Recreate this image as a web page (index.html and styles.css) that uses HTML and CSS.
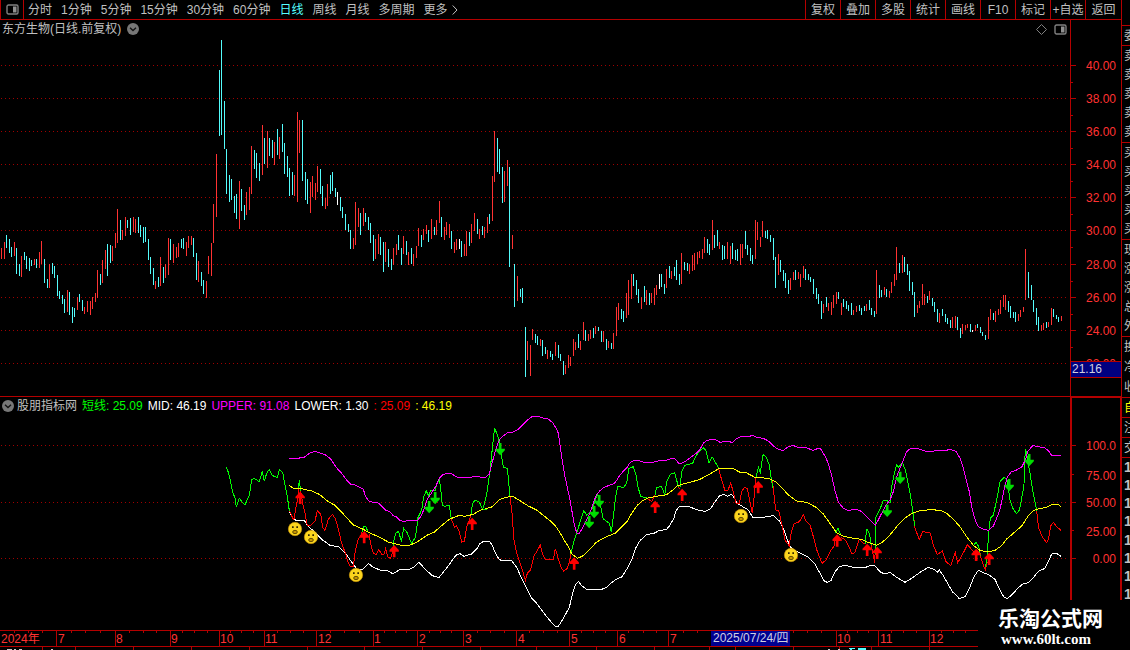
FILE: index.html
```html
<!DOCTYPE html>
<html lang="zh-CN">
<head>
<meta charset="utf-8">
<title>东方生物 日线</title>
<link rel="stylesheet" href="styles.css">
</head>
<body>
<div class="page">
<main class="main">
<nav class="toolbar">
<button class="layout-btn" aria-label="布局"><svg width="13" height="11" viewBox="0 0 13 11"><rect x="1" y="1" width="11" height="9" rx="1.5" fill="none" stroke="#808080" stroke-width="1.4"/><path d="M7 2.5h3.5v6H7z" fill="#909090"/></svg></button>
<div class="periods">
<button>分时</button><button>1分钟</button><button>5分钟</button><button>15分钟</button><button>30分钟</button><button>60分钟</button><button class="active">日线</button><button>周线</button><button>月线</button><button>多周期</button><button class="more">更多<svg width="6" height="10" viewBox="0 0 6 10"><path d="M.7 .5L5 5L.7 9.5" fill="none" stroke="#c0c0c0"/></svg></button>
</div>
<div class="tools">
<button>复权</button><button>叠加</button><button>多股</button><button>统计</button><button>画线</button><button>F10</button><button>标记</button><button>+自选</button><button>返回</button>
</div>
</nav>

<section class="panel price">
<div class="plot">
<header class="plot-head">
<span>东方生物(日线.前复权)</span>
<button class="fold" aria-label="展开"><svg width="12" height="12" viewBox="0 0 12 12"><circle cx="6" cy="6" r="6" fill="#777"/><path d="M3 4.7L6 7.5L9 4.7" fill="none" stroke="#111" stroke-width="1.3"/></svg></button>
<span class="head-icons">
<svg width="11" height="11" viewBox="0 0 11 11"><path d="M5.5 .5l5 5l-5 5l-5-5z" fill="none" stroke="#808080"/></svg>
<svg width="13" height="11" viewBox="0 0 13 11"><rect x="1" y="1" width="11" height="9" rx="1.5" fill="none" stroke="#808080" stroke-width="1.4"/><path d="M7 2.5h3.5v6H7z" fill="#909090"/></svg>
</span>
</header>
<svg class="chart price-chart" viewBox="0 120 3210 1068" preserveAspectRatio="none">
<path class="grid" d="M3 196.500H3198M3 295.500H3198M3 394.500H3198M3 493.500H3198M3 592.500H3198M3 691.500H3198M3 793.500H3198M3 892.500H3198M3 991.500H3198M3 1090.500H3198"/>
<g class="bars" transform="translate(.5 90)">
<path class="up" d="M4 654V687M13 636V687M43 636V678M64 678V741M103 687V705M118 666V714M124 633V702M148 702V774M202 780V846M232 801V840M253 831V852M262 813V846M271 813V855M277 801V837M286 789V816M292 720V804M307 690V759M316 660V717M337 648V693M346 609V654M352 537V639M367 600V630M376 561V618M400 561V606M406 567V609M466 753V777M481 681V768M496 702V744M505 624V735M520 642V699M529 651V684M535 639V681M559 636V678M565 618V654M574 618V645M595 693V756M619 753V804M625 678V732M634 639V738M640 522V639M649 372V561M718 453V597"/>
<path class="down" d="M19 615V654M28 627V669M34 651V681M49 654V732M58 702V738M73 666V690M79 678V717M88 684V723M94 690V708M109 687V714M133 687V759M142 747V774M157 699V732M163 708V744M172 735V798M178 783V807M187 795V822M193 807V849M208 786V855M217 831V879M223 834V861M238 792V816M247 810V843M301 732V765M322 642V738M331 645V699M361 570V630M382 570V594M391 564V615M415 561V609M421 585V621M430 591V639M436 591V636M445 627V690M451 681V732M460 714V765M475 741V771M490 711V759M511 627V690M544 627V654M550 624V657M580 624V681M589 669V750M604 726V768M610 750V792M658 120V318M664 30V315M673 213V357M679 357V492M688 435V516M694 447V510M703 498V549M709 492V567"/>
</g>
<g class="bars" transform="translate(720.5 270)">
<path class="up" d="M19 306V375M28 291V360M34 168V312M67 105V255M82 123V234M103 156V225M118 141V207M163 255V318M172 66V336M178 90V189M211 276V369M217 258V321M226 279V330M232 228V306M256 324V357M262 282V348M340 444V477M346 336V465M355 354V411M370 354V408M406 447V507M415 432V492M436 456V516M460 474V525M469 462V495M490 438V492M505 486V525M520 492V528M529 468V504M535 414V468M550 417V450M559 405V432M574 387V447M589 390V435M598 333V399M613 411V450M619 396V435M628 402V444M643 456V489M649 447V480M673 462V498M679 423V498M694 402V459M703 369V423M718 417V447"/>
<path class="down" d="M4 297V363M13 345V390M43 180V237M49 189V264M58 219V273M73 144V222M88 144V198M97 150V204M112 117V195M127 102V186M133 159V252M142 198V261M148 234V318M157 246V315M187 90V273M196 246V330M202 267V342M241 237V312M247 288V348M271 255V312M277 246V303M286 294V321M301 321V363M307 351V384M316 372V420M325 402V426M331 420V477M361 369V435M376 369V396M385 381V420M391 399V459M400 435V513M421 441V495M430 456V546M445 477V531M454 507V540M475 435V480M484 474V525M499 453V495M514 474V522M544 435V471M565 420V456M583 411V435M604 381V441M634 423V477M664 453V501M688 426V468M712 387V432"/>
<path class="flat" d="M292 306V345M658 447V477"/>
</g>
<g class="bars" transform="translate(1440.5 360)">
<path class="up" d="M13 321V354M22 291V339M37 168V303M43 33V186M73 153V246M82 120V198M97 345V387M112 468V543M142 663V720M151 675V768M157 627V660M181 657V678M202 690V717M226 666V708M256 735V762M265 705V744M271 711V738M280 657V708M286 666V690M301 663V690M310 606V660M325 642V663M331 630V657M346 618V642M370 633V666M385 663V684M400 639V687M409 561V648M415 549V600M439 519V594M445 480V585M454 462V537M484 531V567M499 510V555M514 519V549M523 504V555M529 495V525M559 447V504M574 453V477M604 399V492M628 432V462M637 405V453M643 399V450M652 396V432M658 393V414M667 387V417M673 351V399M697 300V390M718 366V387M742 366V417M751 378V432M781 372V435M787 372V414M826 300V417M832 306V360"/>
<path class="down" d="M7 318V345M28 282V312M52 54V156M58 87V162M67 141V249M88 141V441M103 432V561M121 507V531M127 504V549M136 621V771M166 642V669M172 648V675M187 660V708M196 681V702M211 693V711M217 702V720M235 675V714M241 702V723M250 723V765M295 642V684M316 630V663M340 624V654M355 621V633M364 633V666M379 657V690M394 669V687M424 567V597M430 573V606M460 462V498M469 480V525M475 507V549M493 498V546M508 519V555M544 462V501M553 492V522M568 438V474M583 441V468M589 420V480M598 462V495M613 426V450M622 429V453M682 357V399M688 372V405M703 345V384M712 330V378M727 375V420M733 378V417M757 369V417M766 390V420M772 387V423M796 333V387M802 375V405M811 384V423M817 405V432"/>
<path class="flat" d="M538 462V507"/>
</g>
<g class="bars" transform="translate(2280.5 600)">
<path class="up" d="M1 111V141M7 63V111M55 162V225M91 234V270M100 216V240M115 216V237M121 222V261M130 198V234M190 312V339M205 309V333M214 306V345M220 285V324M229 276V312M244 309V345M280 330V345M289 318V336M319 312V333M349 210V342M373 261V285M388 273V294M394 246V279M403 222V258M409 141V240M427 165V219M472 315V339M478 303V324M487 252V315M493 282V315M508 273V300M538 339V369M577 351V384M586 348V384M607 372V402M616 375V390M622 372V384M646 375V393M685 351V417M691 327V360M706 333V366M715 327V345M721 300V342M730 285V321M736 285V330M775 342V363M781 330V351M790 321V336M796 147V300M844 375V393M850 369V390M865 366V381M874 324V375M904 348V363"/>
<path class="down" d="M16 93V114M22 90V117M31 105V126M40 114V180M46 171V264M61 180V216M70 210V243M76 219V264M85 240V282M106 210V240M136 207V240M145 222V240M151 231V246M160 237V282M169 264V297M175 282V312M184 303V357M199 291V321M235 276V297M250 297V321M259 303V327M265 315V333M274 309V345M298 315V333M304 324V345M313 318V333M328 300V330M334 324V345M343 333V351M358 255V294M364 270V291M379 267V291M418 189V219M433 171V216M442 192V225M448 213V273M457 246V285M463 276V351M502 288V309M517 294V318M523 306V336M532 327V366M547 327V348M556 342V366M562 354V372M571 360V384M592 351V390M601 384V414M631 372V396M652 372V384M661 381V399M667 396V408M676 405V420M700 339V360M745 303V336M751 318V354M760 336V354M766 336V366M805 216V294M814 255V300M820 300V336M829 324V375M835 351V393M859 366V384M880 327V351M889 345V357M895 351V366"/>
<path class="flat" d="M637 390V396"/>
</g>
</svg>
</div>
<svg class="axis" width="51" height="376" viewBox="0 0 51 376">
<path class="rule" d="M.5 0V376M1 45.500H6M1 78.500H6M1 111.500H6M1 144.500H6M1 177.500H6M1 210.500H6M1 244.500H6M1 277.500H6M1 310.500H6M1 62.500H3M1 95.500H3M1 128.500H3M1 161.500H3M1 194.500H3M1 227.500H3M1 261.500H3M1 294.500H3M1 327.500H3"/>
<g class="scale">
<text x="46" y="50">40.00</text><text x="46" y="83">38.00</text><text x="46" y="116">36.00</text><text x="46" y="149">34.00</text><text x="46" y="182">32.00</text><text x="46" y="215">30.00</text><text x="46" y="249">28.00</text><text x="46" y="282">26.00</text><text x="46" y="315">24.00</text><text x="46" y="348">22.00</text>
</g>
<rect x="1" y="341" width="50" height="17" fill="#000080"/>
<path class="rule" d="M1 341.500H51M1 357.500H51"/>
<text class="cursor-value" x="2" y="353">21.16</text>
</svg>
</section>

<section class="panel indicator">
<div class="plot">
<header class="legend">
<button class="fold" aria-label="折叠"><svg width="12" height="12" viewBox="0 0 12 12"><circle cx="6" cy="6" r="6" fill="#777"/><path d="M3 4.7L6 7.5L9 4.7" fill="none" stroke="#111" stroke-width="1.3"/></svg></button>
<span>股朋指标网</span><span class="green">短线: 25.09</span><span class="white">MID: 46.19</span><span class="magenta">UPPER: 91.08</span><span class="white">LOWER: 1.30</span><span class="red">: 25.09</span><span class="yellow">: 46.19</span>
</header>
<svg class="chart indicator-chart" viewBox="0 1242 3210 648" preserveAspectRatio="none">
<defs>
<path id="buy" d="M0 0L14 15V20H4V37H-4V20H-14V15Z" fill="#f00"/>
<path id="sell" d="M0 0L14 -15V-20H4V-37H-4V-20H-14V-15Z" fill="#00dc00"/>
<g id="face"><circle r="20" fill="#fbd51e" stroke="#c89408" stroke-width="2"/><path d="M-9 -8h5v5h-5zM4 -8h5v5h-5z" fill="#332600"/><ellipse cy="9" rx="7" ry="5" fill="#c79600" stroke="#493700" stroke-width="2.500"/></g>
</defs>
<path class="grid" d="M3 1336.500H3198M3 1507.500H3198M3 1675.500H3198"/>
<g class="lines" transform="translate(0 1170)">
<polyline class="s-white" points="868,366 878,384 888,391 912,390 925,410 935,418 950,432 965,448 990,466 1015,470 1035,488 1060,523 1072,538 1088,538 1106,521 1120,532 1140,540 1160,541 1178,551 1200,539 1228,538 1243,530 1257,517 1275,537 1297,557 1317,563 1330,546 1348,524 1360,506 1370,494 1380,491 1392,499 1415,492 1430,477 1440,461"/>
<path class="s-green" d="M679 231L686 250L692 277L698 305L705 325L709 352L718 325L726 336L735 344L748 316L755 270L763 265L778 275L787 244L793 274L800 250L808 238L816 256L832 263L838 238L848 247L855 285L862 320L868 362M895 300L898 270L902 303M1085 428L1092 408L1098 410L1105 430M1178 490L1181 455L1187 430L1196 424L1204 455L1211 415L1220 425L1235 461L1245 443L1250 420L1253 385L1265 360L1271 320L1279 302L1285 318L1293 300L1305 303L1310 285L1318 268L1323 305L1327 345L1335 349L1348 346L1354 388M1412 380L1417 343L1425 330L1438 336L1448 358"/>
<path class="s-red" d="M868 362L878 384L882 388L888 350L893 325L897 296M902 303L908 340L915 370L922 408L932 406L945 393L952 362L962 372L968 412L975 421L985 388L997 373L1007 388L1015 418L1025 460L1037 492L1045 520L1052 530L1060 530L1066 482L1075 445L1082 440L1085 425M1107 432L1112 462L1120 490L1128 494L1136 478L1145 492L1152 492L1157 476L1164 502L1172 505L1178 485M1354 388L1364 412L1370 408L1378 425L1385 456L1393 455L1400 412L1412 378"/>
<polyline class="s-yellow" points="868,286 882,297 905,296 935,303 958,313 985,335 1005,346 1030,372 1060,405 1090,418 1110,429 1135,440 1165,456 1185,461 1205,466 1228,466 1245,459 1262,449 1280,436 1302,427 1325,407 1348,388 1365,381 1378,376 1395,379 1420,373 1440,361"/>
<polyline class="s-magenta" points="868,205 892,205 912,202 928,190 946,184 960,189 975,194 992,207 1003,224 1015,240 1023,247 1040,270 1053,283 1066,285 1080,292 1090,298 1096,317 1105,332 1120,337 1135,339 1147,350 1158,361 1170,366 1180,377 1190,381 1200,392 1212,394 1230,391 1253,391 1262,380 1272,358 1282,328 1297,305 1307,290 1317,266 1330,253 1342,250 1356,252 1370,261 1390,262 1410,262 1425,259 1440,261"/>
</g>
<g class="lines" transform="translate(1200 1200)">
<polyline class="s-white" points="240,431 250,424 268,424 277,436 285,457 298,479 312,483 335,482 350,502 366,538 378,562 395,595 410,610 425,630 440,650 455,668 468,680 475,679 490,655 508,622 518,580 526,554 536,545 545,557 558,567 580,569 600,570 618,563 632,550 650,537 665,531 680,508 695,480 706,446 720,422 740,403 760,401 775,393 800,388 808,378 822,355 828,332 838,320 870,321 890,329 900,332"/>
<path class="s-green" d="M248 328L256 300L262 270L270 215L277 145L284 83L290 100L294 112L300 135L305 172L310 202L322 205L326 245L330 292M512 462L520 430L528 405L536 380L545 350L551 332L560 345L567 340L578 322L586 300L592 283L598 300L604 330L610 357L628 370L634 397L640 350L647 290L653 260L672 262L680 248L687 205L700 200L708 225L715 265L723 290L742 293M765 285L770 262L785 260L794 285L800 245L812 222L824 218L830 240L835 262M840 262L845 215L855 196L878 190L884 175L896 155L910 143L918 152L927 188L936 170L945 185L956 205"/>
<path class="s-red" d="M330 292L336 340L342 420L349 455L360 488L370 520L376 541L382 520L392 509L402 468L414 448L421 435L427 460L436 479L460 479L466 446L476 480L484 503L491 514L502 505L510 478L512 462M742 296L755 304L765 285M835 262L840 266"/>
<polyline class="s-yellow" points="240,331 275,321 300,298 330,289 340,290 360,302 385,318 410,330 430,346 450,362 468,380 480,398 492,420 505,440 515,462 533,475 550,467 570,447 588,428 605,417 625,408 645,400 665,380 680,366 695,340 712,316 728,302 745,294 775,288 800,284 815,273 832,258 850,252 880,244 900,238"/>
<polyline class="s-magenta" points="240,231 258,231 268,222 276,190 284,160 294,130 300,116 310,108 322,98 340,96 352,90 366,76 380,62 396,50 410,48 430,54 445,57 458,68 468,84 475,100 481,140 488,190 494,225 502,262 510,300 517,340 523,375 530,398 536,402 543,392 550,378 558,362 566,348 575,325 582,303 590,284 600,272 612,262 628,256 640,252 648,244 658,228 668,216 680,204 690,188 702,182 715,181 732,187 758,187 775,183 795,182 812,176 826,177 838,192 850,188 870,174 888,160 900,148"/>
</g>
<path class="lines s-green" d="M1448 1528L1462 1528"/>
<g class="lines" transform="translate(2100 1260)">
<polyline class="s-white" points="0,272 15,274 32,266 45,245 58,228 70,223 82,229 95,223 103,234 112,250 130,261 145,270 158,292 190,292 220,287 238,303 252,330 262,360 272,382 285,392 305,402 325,412 345,432 360,460 373,483 382,487 393,482 405,455 418,440 435,436 470,444 495,443 512,436 525,438 540,455 553,462 570,457 590,472 615,487 635,475 660,457 685,442 700,447 712,456 718,450 730,467 745,494 758,516 768,525 778,536 795,530 808,505 822,470 835,451 850,458 865,463 885,478 900,510 912,532 922,536 935,525 955,503 970,491 985,488 1000,473 1015,454 1035,445 1045,425 1055,402 1070,400 1083,409"/>
<path class="s-red" d="M56 146L65 180L75 212L84 210L92 190L100 215L108 250L118 250L125 215L133 202L142 205L150 245L157 280L163 225L168 170M212 178L217 183L221 215L227 270L236 272L245 310L255 360L268 378L272 345L282 311L298 305L310 284L318 304L330 315L340 350L352 395L366 430L378 420L390 395L402 378L408 350M424 352L436 360L446 378L456 402L464 398L478 358L490 370L497 372M514 375L524 428L526 385M640 285L645 325L658 358L668 335L690 338L700 375L712 404L727 393L738 425L752 437L766 398L773 428L785 408L802 375L812 385L820 395M838 400L848 430L856 450L862 425M1010 272L1016 325L1028 352L1040 368L1046 355L1052 318L1060 307L1070 320L1083 331"/>
<path class="s-green" d="M168 172L175 142L181 157L189 104L198 110L208 135L214 178L219 205M405 340L414 325L422 345M495 372L498 345L501 328L508 340L514 375M525 405L528 290L540 268L550 240L558 240L570 248L575 200L582 165L590 135L596 142L607 127L616 150L624 190L632 230L640 285L644 318M820 378L828 366L836 380L842 408M857 440L862 400L866 340L871 295L880 285L890 240L900 185L912 172L922 180L930 240L940 268L950 281L958 270L965 235L972 195L973 130L977 88L983 120L990 160L997 205L1008 262L1010 272"/>
<polyline class="s-yellow" points="0,178 30,162 56,146 75,145 100,146 120,157 140,159 165,172 205,175 225,184 245,202 265,225 290,243 320,247 350,263 370,282 390,310 410,338 430,349 460,355 485,358 500,366 530,376 548,366 568,347 590,320 612,297 635,280 660,272 690,269 722,271 740,280 760,298 780,320 800,350 820,376 840,391 865,396 885,391 905,377 920,357 940,340 965,318 985,287 1000,272 1015,267 1040,262 1055,254 1075,253 1083,260"/>
<polyline class="s-magenta" points="0,88 10,70 20,61 45,58 60,67 80,64 97,67 110,56 125,48 142,51 158,46 170,52 190,55 205,63 220,78 235,88 250,92 262,82 278,76 295,82 320,84 340,91 352,86 362,87 375,108 385,130 395,167 405,212 415,246 430,265 445,272 460,268 480,271 500,290 515,305 526,315 535,300 545,280 558,256 570,240 580,215 590,170 602,140 610,120 620,95 632,85 655,86 675,93 695,94 720,91 735,92 750,88 768,94 780,115 790,145 800,185 808,215 815,260 824,295 833,318 848,327 866,331 880,318 890,295 900,268 908,230 915,195 922,172 933,156 950,150 966,140 978,115 983,95 998,77 1015,80 1035,84 1045,92 1055,106 1083,106"/>
</g>
<g>
<use href="#buy" x="900.500" y="1475"/><use href="#buy" x="1092.500" y="1593"/><use href="#buy" x="1182.500" y="1635"/><use href="#buy" x="1416.500" y="1553"/><use href="#buy" x="1722.500" y="1672"/><use href="#buy" x="1965.500" y="1502"/><use href="#buy" x="2046.500" y="1466"/><use href="#buy" x="2274.500" y="1443"/><use href="#buy" x="2511.500" y="1603"/><use href="#buy" x="2601.500" y="1631"/><use href="#buy" x="2631.500" y="1640"/><use href="#buy" x="2928.500" y="1646"/><use href="#buy" x="2967.500" y="1658"/>
<use href="#sell" x="1287.500" y="1540"/><use href="#sell" x="1305.500" y="1513"/><use href="#sell" x="1500.500" y="1366"/><use href="#sell" x="1767.500" y="1585"/><use href="#sell" x="1782.500" y="1555"/><use href="#sell" x="1797.500" y="1522"/><use href="#sell" x="2661.500" y="1551"/><use href="#sell" x="2700.500" y="1452"/><use href="#sell" x="3027.500" y="1474"/><use href="#sell" x="3087.500" y="1399"/>
<use href="#face" x="885" y="1587"/><use href="#face" x="933" y="1611"/><use href="#face" x="1068" y="1725"/><use href="#face" x="2223" y="1548"/><use href="#face" x="2373" y="1665"/>
</g>
</svg>
</div>
<svg class="axis" width="51" height="233" viewBox="0 0 51 233">
<path d="M0 0H51V1H2V233H0ZM50 0H51V233H50Z" fill="#b40000"/>
<path class="rule" d="M2 48.500H6M2 77.500H4M2 105.500H6M2 133.500H4M2 161.500H6"/>
<g class="scale">
<text x="46" y="53">100.0</text><text x="46" y="83">75.00</text><text x="46" y="110">50.00</text><text x="46" y="139">25.00</text><text x="46" y="166">0.00</text>
</g>
</svg>
</section>

<svg class="timeline" viewBox="0 0 1121 20">
<path class="rule" d="M0 .5H1121M0 16.500H1121M56.500 0V16M115.500 0V16M170.500 0V16M219.500 0V16M264.500 0V16M316.500 0V16M373.500 0V16M417.500 0V16M463.500 0V16M516.500 0V16M569.500 0V16M617.500 0V16M668.500 0V16M836.500 0V16M878.500 0V16M929.500 0V16"/>
<path class="rule" d="M14.500 0V3M28.500 0V3M42.500 0V3M71.500 0V3M85.500 0V3M100.500 0V3M129.500 0V3M143.500 0V3M156.500 0V3M182.500 0V3M194.500 0V3M207.500 0V3M230.500 0V3M241.500 0V3M253.500 0V3M277.500 0V3M290.500 0V3M303.500 0V3M330.500 0V3M344.500 0V3M359.500 0V3M384.500 0V3M395.500 0V3M406.500 0V3M429.500 0V3M440.500 0V3M451.500 0V3M477.500 0V3M490.500 0V3M504.500 0V3M529.500 0V3M543.500 0V3M557.500 0V3M581.500 0V3M593.500 0V3M605.500 0V3M628.500 0V3M643.500 0V3M656.500 0V3M683.500 0V3M697.500 0V3M793.500 0V3M807.500 0V3M821.500 0V3M847.500 0V3M857.500 0V3M868.500 0V3M891.500 0V3M903.500 0V3M916.500 0V3M941.500 0V3M953.500 0V3M965.500 0V3M42.500 17V20M75.500 17V20M133.500 17V20M191.500 17V20M249.500 17V20M307.500 17V20M364.500 17V20M422.500 17V20M480.500 17V20M536.500 17V20M596.500 17V20M654.500 17V20M709.500 17V20M735.500 17V20M793.500 17V20M839.500 17V20M871.500 17V20M929.500 17V20"/>
<path d="M7 19.500h5M14 19.500h2M19 19.500h3M51 19.500h2M828 19.500h2M838 19.500h2" stroke="#ccc"/><path d="M849 18.500h6M858 18.500h8M850 19.500h2M858 19.500h8" stroke="#5ff"/>
<g class="months">
<text x="1" y="13">2024年</text><text x="58" y="13">7</text><text x="116" y="13">8</text><text x="171" y="13">9</text><text x="220" y="13">10</text><text x="265" y="13">11</text><text x="318" y="13">12</text><text x="374" y="13">1</text><text x="419" y="13">2</text><text x="465" y="13">3</text><text x="518" y="13">4</text><text x="571" y="13">5</text><text x="619" y="13">6</text><text x="670" y="13">7</text><text x="837" y="13">10</text><text x="880" y="13">11</text><text x="930" y="13">12</text>
</g>
<rect x="711" y="1" width="79" height="15" fill="#000090"/>
<text class="cursor-value" x="713" y="12">2025/07/24/四</text>
</svg>
</main>

<aside class="quotes">
<div class="q-group q-first"><span>委</span></div>
<div class="q-group q-five"><span>卖</span><span>卖</span><span>卖</span><span>卖</span><span>卖</span></div>
<div class="q-group q-five"><span>买</span><span>买</span><span>买</span><span>买</span><span>买</span></div>
<div class="q-group q-five"><span>现</span><span>涨</span><span>涨</span><span>总</span><span>外</span></div>
<div class="q-group q-three"><span>换</span><span>净</span><span>收</span></div>
<div class="q-group yellow"><span>自</span></div>
<div class="q-group"><span>注</span></div>
<div class="q-group"><span>交</span></div>
<div class="q-group q-ticks"><span>1</span><span>1</span><span>1</span><span>1</span><span>1</span><span>1</span><span>1</span><span>1</span></div>
</aside>
<footer class="brand"><strong>乐淘公式网</strong><a href="#">www.60lt.com</a></footer>
</div>
</body>
</html>
```
FILE: styles.css
```css
* { box-sizing: border-box; }
body {
  margin: 0;
  background: #000;
  color: #c0c0c0;
  font: 12px/16px "Liberation Sans", "Noto Sans CJK SC", sans-serif;
}
button {
  margin: 0;
  padding: 0;
  border: 0;
  background: none;
  color: inherit;
  font: inherit;
  white-space: nowrap;
}
svg { display: block; }
.page {
  position: relative;
  display: grid;
  grid-template-columns: minmax(0, 1fr) 9px;
  overflow: hidden;
}
.main { min-width: 0; }

.toolbar {
  display: flex;
  height: 20px;
  border-bottom: 1px solid #b40000;
}
.layout-btn {
  display: flex;
  width: 24px;
  align-items: center;
  justify-content: center;
  border: solid #b40000;
  border-width: 0 1px;
}
.periods {
  display: flex;
  flex: 1;
  align-items: center;
  gap: 9px;
  padding-left: 4px;
}
.active { color: #5ff; }
.more { display: flex; align-items: center; gap: 4px; }
.tools { display: flex; }
.tools button { width: 35px; border-left: 1px solid #b40000; }
.tools button:last-child { width: 36px; }

.panel { display: flex; }
.plot { flex: 1; min-width: 0; }
.axis { flex: none; }
.price { border-bottom: 1px solid #b40000; }
.plot-head {
  display: flex;
  align-items: center;
  gap: 6px;
  height: 20px;
  padding: 0 3px 2px 2px;
}
.head-icons {
  display: flex;
  align-items: center;
  gap: 7px;
  margin-left: auto;
}
.legend {
  display: flex;
  align-items: center;
  gap: 5px;
  height: 17px;
  padding-left: 2px;
  white-space: nowrap;
}
.legend .fold { margin-right: -2px; }
.chart { width: 100%; }
.price-chart { height: 356px; }
.indicator-chart { height: 216px; }

.grid {
  fill: none;
  stroke: #a00000;
  stroke-width: 3;
  stroke-dasharray: 3 9;
  shape-rendering: crispEdges;
}
.bars path { fill: none; stroke-width: 3; shape-rendering: crispEdges; }
.bars .up { stroke: #ff3232; }
.bars .down { stroke: #54fcfc; }
.bars .flat { stroke: #fff; }
.lines { fill: none; stroke-width: 3; shape-rendering: crispEdges; }
.s-white { stroke: #fff; }
.s-green { stroke: #0f0; }
.s-red { stroke: #f00; }
.s-yellow { stroke: #ff0; }
.s-magenta { stroke: #f0f; }
.rule { fill: none; stroke: #b40000; shape-rendering: crispEdges; }
.scale { fill: #ff3232; text-anchor: end; }
.months { fill: #ff3232; }
.cursor-value { fill: #d0d0e0; }
.timeline { width: 100%; }

.green { color: #0f0; }
.white { color: #fff; }
.magenta { color: #f0f; }
.red { color: #f00; }
.yellow { color: #ff0; }

.quotes {
  height: 650px;
  padding-top: 25px;
  border-left: 1px solid #b40000;
  overflow: hidden;
}
.q-group {
  display: flex;
  flex-direction: column;
  justify-content: space-around;
  height: 20px;
  padding-left: 2px;
  border-top: 1px solid #b40000;
}
.q-group span { line-height: 18px; }
.q-five { height: 97px; }
.q-three { height: 61px; }
.q-ticks { height: 146px; font-size: 14px; font-weight: bold; }

.brand {
  position: absolute;
  right: 0;
  bottom: 0;
  display: flex;
  flex-direction: column;
  width: 152px;
  height: 50px;
  padding: 7px 0 0 20px;
  background: #000;
  color: #fff;
}
.brand strong { font-size: 21px; line-height: 24px; }
.brand a {
  padding-left: 3px;
  color: inherit;
  font: bold 15px/16px "Liberation Serif", serif;
  text-decoration: none;
}
```
